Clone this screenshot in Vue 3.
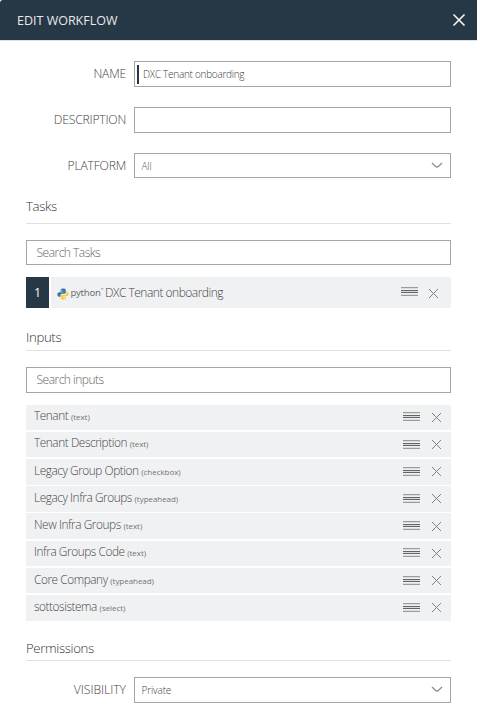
<script setup>
import { ref } from 'vue'

const name = ref('DXC Tenant onboarding')
const description = ref('')
const inputs = [
  { label: 'Tenant', type: 'text' },
  { label: 'Tenant Description', type: 'text' },
  { label: 'Legacy Group Option', type: 'checkbox' },
  { label: 'Legacy Infra Groups', type: 'typeahead' },
  { label: 'New Infra Groups', type: 'text' },
  { label: 'Infra Groups Code', type: 'text' },
  { label: 'Core Company', type: 'typeahead' },
  { label: 'sottosistema', type: 'select' },
]
</script>

<template>
  <div class="dialog">
    <header class="header">
      <h1 class="title">EDIT WORKFLOW</h1>
      <svg class="close" width="14" height="14" viewBox="0 0 14 14"><path d="M1.5 1.5L12.5 12.5M12.5 1.5L1.5 12.5" /></svg>
    </header>

    <main class="body">
      <div class="field">
        <label class="label">NAME</label>
        <div class="control named"><span class="marker"></span><input v-model="name" class="entry" /></div>
      </div>
      <div class="field second">
        <label class="label">DESCRIPTION</label>
        <div class="control"><input v-model="description" class="entry" /></div>
      </div>
      <div class="field third">
        <label class="label">PLATFORM</label>
        <div class="control select short pale">
          <span>All</span>
          <svg class="chevron" width="12" height="7" viewBox="0 0 12 7"><path d="M1 1L4.4 4.2Q6 5.6 7.6 4.2L11 1" /></svg>
        </div>
      </div>

      <h2 class="section tasks-title">Tasks</h2>
      <input class="search tasks-search" placeholder="Search Tasks" />
      <div class="task">
        <span class="badge">1</span>
        <div class="task-body">
          <svg class="logo" width="12" height="12" viewBox="0 0 24 24">
            <path class="blue" d="M12 1C8 1 7 2.500 7 5v2.500h5.500v1H4.500C2 8.500.8 10.500.8 13s1.200 4.500 3.500 4.500H7v-3c0-2 1.500-3.200 3.500-3.200H15c1.500 0 2.500-1.200 2.500-2.800V5C17.500 2.200 16 1 12 1z" />
            <path class="yellow" d="M12.500 23.500c4 0 5-1.500 5-4V17H12v-1h8c2.500 0 3.500-2 3.500-4.200C23.500 9 22 7 20 7h-1.500v3.500c0 2-1.500 3-3.500 3h-5c-1.500 0-2.500 1.200-2.500 2.800v3.200c0 2.800 1.500 4 5 4z" />
            <circle class="eye" cx="9.500" cy="4.500" r="1" /><circle class="eye" cx="15" cy="20" r="1" />
          </svg>
          <span class="wordmark">python</span><span class="tm">™</span>
          <span class="task-name">DXC Tenant onboarding</span>
          <svg class="grip" width="17" height="10" viewBox="0 0 17 10">
            <path class="faint" d="M0 .5H17M0 8.500H17" /><path class="haze" d="M0 4.500H17M0 1.500H17M0 7.500H17" /><path class="dark" d="M0 3.500H17M0 5.500H17" />
          </svg>
          <svg class="remove" width="11" height="11" viewBox="0 0 11 11"><path d="M1 1L10 10M10 1L1 10" /></svg>
        </div>
      </div>

      <h2 class="section inputs-title">Inputs</h2>
      <input class="search inputs-search" placeholder="Search inputs" />
      <ul class="list">
        <li v-for="item in inputs" :key="item.label" class="row">
          <span class="row-text">{{ item.label }} <small>({{ item.type }})</small></span>
          <svg class="grip" width="17" height="10" viewBox="0 0 17 10">
            <path class="faint" d="M0 .5H17M0 8.500H17" /><path class="haze" d="M0 4.500H17M0 1.500H17M0 7.500H17" /><path class="dark" d="M0 3.500H17M0 5.500H17" />
          </svg>
          <svg class="remove" width="11" height="11" viewBox="0 0 11 11"><path d="M1 1L10 10M10 1L1 10" /></svg>
        </li>
      </ul>

      <h2 class="section permissions-title">Permissions</h2>
      <div class="field visibility">
        <label class="label">VISIBILITY</label>
        <div class="control select">
          <span>Private</span>
          <svg class="chevron" width="12" height="7" viewBox="0 0 12 7"><path d="M1 1L4.4 4.2Q6 5.6 7.6 4.2L11 1" /></svg>
        </div>
      </div>
    </main>
  </div>
</template>

<style>
body { background: #fff; overflow: hidden; }
</style>

<style scoped>
* { box-sizing: border-box; }
.dialog { width: 477px; height: 716px; font-family: "Open Sans", "Noto Sans", sans-serif; font-weight: 300; color: #444; background: #fff; }
.header { display: flex; align-items: center; justify-content: space-between; height: 41px; padding: 0 11px 0 17px; background: #263746; border-bottom: 1px solid #dfe1e3; border-top-left-radius: 3px; }
.title { margin: 0; padding-top: 1px; font-size: 12.5px; font-weight: 400; letter-spacing: 0; color: #e8eaec; }
.close { fill: none; stroke: #fff; stroke-width: 1.5; }
.body { padding: 20px 26px 0; }
.field { display: flex; align-items: center; }
.second, .third { margin-top: 20px; }
.label { width: 100px; margin-right: 8px; text-align: right; font-size: 12.2px; line-height: 20px; letter-spacing: -0.22px; }
.control { display: flex; align-items: center; flex: 1; height: 26px; border: 1px solid #a6a6a6; padding: 0 7px 0 6.5px; font-size: 10px; letter-spacing: -0.15px; }
.control.short { height: 25px; }
.control.named { padding-left: 2px; }
.marker { width: 2px; height: 19px; margin-right: 4px; background: #263746; }
.entry { flex: 1; min-width: 0; padding: 0; border: 0; outline: 0; background: transparent; font: inherit; letter-spacing: -0.28px; color: #3c3c3c; }
.select { justify-content: space-between; }
.pale { color: #505050; }
.chevron { fill: none; stroke: #929292; stroke-width: 1.4; }
.section { margin: 0; border-bottom: 1px solid #e1e1e1; font-size: 13.2px; font-weight: 300; letter-spacing: -0.35px; line-height: 20px; color: #333; }
.tasks-title { height: 28px; margin-top: 18px; }
.search { display: block; width: 100%; border: 1px solid #a6a6a6; padding: 0 9.5px; border-radius: 0; outline: 0; font: inherit; font-size: 12px; letter-spacing: -0.5px; }
.search::placeholder { color: #646464; opacity: 1; }
.tasks-search { height: 25px; margin-top: 16px; padding-bottom: 1px; }
.task { display: flex; gap: 2px; height: 31px; margin-top: 12px; }
.badge { width: 23px; background: #263746; color: #fff; text-align: center; font-size: 12.5px; font-weight: 400; line-height: 31px; }
.task-body { display: flex; align-items: center; flex: 1; padding: 0 12px 0 6px; background: #f0f1f3; }
.logo { margin-top: 2px; flex: none; }
.blue { fill: #3974a5; }
.yellow { fill: #f8cf45; }
.eye { fill: #f0f1f3; }
.wordmark { width: 30px; margin-left: 1.5px; font-family: "Noto Sans", sans-serif; font-size: 9.5px; font-weight: 400; letter-spacing: -0.2px; line-height: 20px; color: #6c7072; }
.tm { width: 4px; margin: -7px 0 0; font-size: 4px; overflow: hidden; }
.task-name { flex: 1; margin-left: .5px; font-size: 12px; line-height: 20px; letter-spacing: -0.5px; white-space: nowrap; }
.grip, .remove { flex: none; fill: none; }
.faint { stroke: #9b9c9d; }
.haze { stroke: #d9dddc; }
.dark { stroke: #606462; }
.grip { shape-rendering: crispEdges; }
.task .grip { margin-right: 10.5px; margin-top: -2px; }
.remove { stroke: #7d7f80; stroke-width: 1; }
.task .remove { margin-top: 2px; }
.inputs-title { height: 24px; margin-top: 19px; }
.inputs-search { height: 26px; margin-top: 16px; padding-bottom: 2px; }
.list { display: flex; flex-direction: column; gap: 1.73px; height: 215.87px; margin: 11.65px 0 0; padding: 0; list-style: none; }
.row { display: flex; align-items: center; flex: 1 1 0; min-height: 0; padding: 0 9.5px 0 8px; background: #f0f1f3; }
.row-text { flex: 1; padding-bottom: 2.2px; font-size: 11.8px; line-height: 20px; letter-spacing: -0.42px; white-space: nowrap; color: #484848; }
.row-text small { font-size: 8px; font-weight: 400; letter-spacing: -0.05px; color: #747474; }
.row .grip { margin-right: 10.5px; }
.permissions-title { height: 23px; margin-top: 17.48px; }
.visibility { margin-top: 16px; }
.visibility .label { letter-spacing: -0.05px; }
</style>
